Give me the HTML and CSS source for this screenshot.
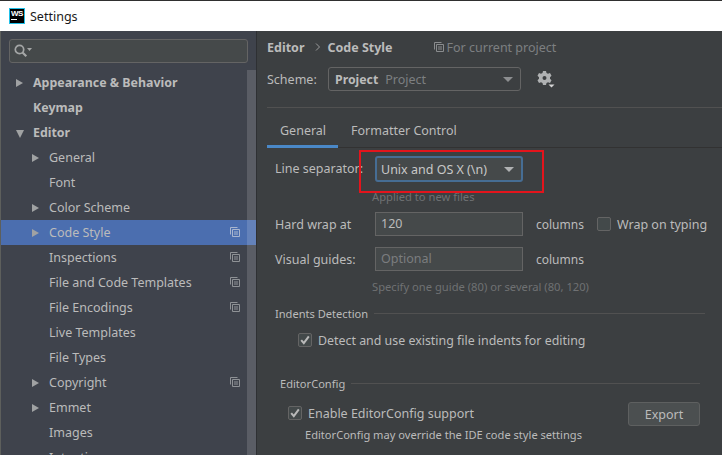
FILE: index.html
```html
<!DOCTYPE html>
<html lang="en">
<head>
<meta charset="utf-8">
<title>Settings</title>
<link rel="stylesheet" href="styles.css">
</head>
<body>
<svg class="defs" width="0" height="0" aria-hidden="true">
  <symbol id="copy" viewBox="0 0 10 10">
    <path d="M.5 7.500V.5h7M2.500 2.500h7v7h-7zM4 5h4M4 7h4" fill="none" stroke="currentColor"/>
  </symbol>
  <symbol id="check" viewBox="0 0 14 14">
    <path d="M3.200 7.200l2.600 3L10.800 3.400" fill="none" stroke="#b9b9b9" stroke-width="2"/>
  </symbol>
</svg>
<div class="window">
  <header class="titlebar">
    <span class="logo"><span class="logo-text">WS</span><span class="logo-bar"></span></span>
    <span class="title">Settings</span>
  </header>
  <div class="content">
    <aside class="sidebar">
      <div class="search">
        <svg class="search-icon" width="18" height="14" viewBox="0 0 18 14"><circle cx="5.500" cy="5.500" r="4.200" fill="none" stroke="#a4a6a6" stroke-width="1.700"/><path d="M8.500 8.500l3.800 3.800" stroke="#a4a6a6" stroke-width="2.200"/><path d="M13 4h5l-2.500 3z" fill="#a4a6a6"/></svg>
      </div>
      <div class="tree-wrap">
        <ul class="tree">
          <li class="row bold"><i class="arrow right"></i>Appearance &amp; Behavior</li>
          <li class="row bold"><i class="arrow none"></i>Keymap</li>
          <li class="row bold"><i class="arrow down"></i>Editor</li>
          <li class="row sub"><i class="arrow right"></i>General</li>
          <li class="row sub"><i class="arrow none"></i>Font</li>
          <li class="row sub"><i class="arrow right"></i>Color Scheme</li>
          <li class="row sub selected"><i class="arrow right"></i>Code Style<svg class="copy"><use href="#copy"/></svg></li>
          <li class="row sub"><i class="arrow none"></i>Inspections<svg class="copy"><use href="#copy"/></svg></li>
          <li class="row sub"><i class="arrow none"></i>File and Code Templates<svg class="copy"><use href="#copy"/></svg></li>
          <li class="row sub"><i class="arrow none"></i>File Encodings<svg class="copy"><use href="#copy"/></svg></li>
          <li class="row sub"><i class="arrow none"></i>Live Templates</li>
          <li class="row sub"><i class="arrow none"></i>File Types</li>
          <li class="row sub"><i class="arrow right"></i>Copyright<svg class="copy"><use href="#copy"/></svg></li>
          <li class="row sub"><i class="arrow right"></i>Emmet</li>
          <li class="row sub"><i class="arrow none"></i>Images</li>
          <li class="row sub"><i class="arrow none"></i>Intentions</li>
        </ul>
        <div class="scrollbar"></div>
      </div>
    </aside>
    <main class="main">
      <div class="crumbs">
        <span class="crumb">Editor</span>
        <svg class="chev" width="6" height="8" viewBox="0 0 6 8"><path d="M1 .5L4.500 4 1 7.500" fill="none" stroke="#9a9c9d"/></svg>
        <span class="crumb">Code Style</span>
        <svg class="copy project-icon"><use href="#copy"/></svg>
        <span class="muted-lg">For current project</span>
      </div>
      <div class="scheme">
        <span class="scheme-label">Scheme:</span>
        <div class="combo scheme-combo">
          <b class="scheme-name">Project</b><span class="muted-lg">Project</span>
          <i class="caret dim"></i>
        </div>
        <svg class="gear" width="18" height="18" viewBox="0 0 18 18"><path fill="#b0b2b3" fill-rule="evenodd" d="M6 1h3l.5 2 1.500.8 2-.7 1.500 2.600-1.500 1.500v1.600l1.500 1.500-1.500 2.600-2-.7-1.500.8L9 15H6l-.5-2-1.500-.8-2 .7L.5 10.300l1.500-1.500V7.200L.5 5.700 2 3.100l2 .7 1.500-.8zM7.500 6a2 2 0 100 4 2 2 0 000-4z"/><path fill="#d5d5d5" d="M11.500 14.500h6l-3 3z"/></svg>
      </div>
      <nav class="tabs">
        <span class="tab active">General</span>
        <span class="tab">Formatter Control</span>
      </nav>
      <section class="form">
        <div class="field first">
          <label class="field-label">Line separator:</label>
          <div class="combo line-combo">Unix and OS X (\n)<i class="caret"></i></div>
        </div>
        <p class="hint hint-applied">Applied to new files</p>
        <div class="field">
          <label class="field-label">Hard wrap at</label>
          <div class="input">120</div>
          <span class="unit">columns</span>
          <span class="box wrap-box"></span>
          <span>Wrap on typing</span>
        </div>
        <div class="field guides">
          <label class="field-label">Visual guides:</label>
          <div class="input placeholder">Optional</div>
          <span class="unit">columns</span>
        </div>
        <p class="hint hint-guides">Specify one guide (80) or several (80, 120)</p>
        <div class="group indents">
          <span>Indents Detection</span><span class="rule"></span>
        </div>
        <div class="check-row detect">
          <span class="box checked"><svg width="14" height="14"><use href="#check"/></svg></span>
          <span>Detect and use existing file indents for editing</span>
        </div>
        <div class="group editorconfig">
          <span>EditorConfig</span><span class="rule"></span>
        </div>
        <div class="check-row enable">
          <span class="box checked"><svg width="14" height="14"><use href="#check"/></svg></span>
          <span>Enable EditorConfig support</span>
          <button class="button">Export</button>
        </div>
        <p class="note">EditorConfig may override the IDE code style settings</p>
      </section>
    </main>
  </div>
</div>
<div class="annotation"></div>
</body>
</html>
```

FILE: styles.css
```css
* { box-sizing: border-box; }
html, body {
  margin: 0;
  height: 455px;
  overflow: hidden;
}
body {
  font-family: "Noto Sans", "Liberation Sans", sans-serif;
  font-size: 12.500px;
  color: #bbbbbb;
  background: #3c3f41;
}
.defs { position: absolute; }
.window {
  display: flex;
  flex-direction: column;
  height: 455px;
  overflow: hidden;
}
.titlebar {
  flex: none;
  height: 31px;
  display: flex;
  align-items: center;
  padding-left: 9px;
  gap: 5px;
  background: #fff;
  border-top: 1px solid #2f2f2f;
  color: #1a1a1a;
}
.logo {
  width: 16px;
  height: 16px;
  background: #000;
  border: 1px solid #21c0e8;
  display: flex;
  flex-direction: column;
  align-items: center;
  color: #fff;
}
.logo-text { font: 700 8px/9px "Liberation Sans", sans-serif; letter-spacing: -.5px; }
.logo-bar { width: 6px; height: 1px; margin: 1px 0 0 -6px; background: #fff; }
.content {
  flex: 1;
  display: flex;
  min-height: 0;
}
.sidebar {
  flex: none;
  width: 257px;
  background: #3f434c;
  border-left: 1px solid #5d5f5c;
  border-right: 1px solid #2e3033;
  padding-top: 8px;
  display: flex;
  flex-direction: column;
}
.search {
  flex: none;
  width: 239px;
  height: 24px;
  margin-left: 8px;
  background: #45494a;
  border: 1px solid #646464;
  border-radius: 3px;
  display: flex;
  align-items: center;
  padding-left: 4px;
}
.tree-wrap {
  flex: 1;
  position: relative;
  margin-top: 7px;
}
.tree {
  list-style: none;
  margin: 0;
  padding: 0;
}
.row {
  height: 25px;
  display: flex;
  align-items: center;
  padding-left: 15px;
  white-space: nowrap;
  position: relative;
}
.row.bold { font-weight: 700; font-size: 12.400px; }
.row.sub { padding-left: 31px; }
.row.selected { background: #4b6eaf; }
.arrow {
  flex: none;
  width: 17px;
  height: 8px;
  position: relative;
}
.arrow::before {
  content: "";
  position: absolute;
  left: 0;
  top: 0;
  border-style: solid;
  border-color: transparent;
}
.arrow.right::before {
  border-width: 4px 0 4px 7px;
  border-left-color: #a0a2a3;
}
.arrow.down::before {
  top: 1px;
  border-width: 8px 4px 0 4px;
  border-top-color: #a0a2a3;
}
.row .copy {
  position: absolute;
  left: 229px;
  top: 7px;
}
.copy {
  width: 10px;
  height: 10px;
  color: #8f9296;
  flex: none;
}
.selected .copy { color: #a9b6cf; }
.scrollbar {
  position: absolute;
  left: 246px;
  top: 0;
  bottom: 0;
  width: 9px;
  background: rgba(255, 255, 255, .14);
}
.main {
  flex: 1;
  min-width: 0;
  padding: 0 0 0 10px;
  background: #3c3f41;
}
.crumbs {
  height: 34px;
  padding-bottom: 2px;
  display: flex;
  align-items: center;
  white-space: nowrap;
}
.crumb { font-weight: 700; }
.chev { margin: 0 6px 0 11px; }
.project-icon { margin: 0 3px 0 41px; color: #8a8c8e; }
.muted-lg { color: #7d7f81; }
.scheme {
  height: 27px;
  display: flex;
  align-items: center;
  white-space: nowrap;
}
.scheme-label { width: 61px; padding-top: 2px; }
.combo {
  position: relative;
  display: flex;
  align-items: center;
  border-radius: 3px;
  color: #bbbbbb;
}
.scheme-combo {
  width: 193px;
  height: 24px;
  padding: 2px 0 0 6px;
  gap: 7px;
  border: 1px solid #646464;
  background: #3c3f41;
}
.scheme-name { font-size: 12.300px; }
.caret {
  position: absolute;
  right: 7px;
  top: 9px;
  border-style: solid;
  border-color: #b0b2b3 transparent transparent;
  border-width: 5px 5px 0;
}
.caret.dim { border-top-color: #8c8e90; }
.gear { margin: 1px 0 0 16px; }
.tabs {
  height: 41px;
  margin-top: 15px;
  border-top: 1px solid #515151;
  border-bottom: 1px solid #323232;
  display: flex;
  align-items: flex-end;
  white-space: nowrap;
}
.tab {
  height: 26px;
  padding: 1px 13px 0;
}
.tab.active {
  width: 71px;
  border-bottom: 3px solid #4a88c7;
  margin-bottom: -1px;
  height: 27px;
}
.form { padding-left: 8px; }
.field {
  display: flex;
  align-items: center;
  height: 24px;
  white-space: nowrap;
}
.field.first { margin-top: 8px; }
.field.guides { margin-top: 11px; }
.field-label { flex: none; width: 100px; }
.line-combo {
  width: 148px;
  height: 26px;
  margin-top: 2px;
  padding-left: 4px;
  border: 2px solid #466d94;
  background: #45494a;
  color: #c8c8c8;
}
.input {
  width: 148px;
  height: 24px;
  padding-left: 5px;
  line-height: 22px;
  border: 1px solid #646464;
  background: #45494a;
}
.placeholder { color: #7b7d7f; }
.unit { width: 74px; padding-left: 13px; font-size: 12px; }
.hint {
  margin: 0;
  padding-left: 97px;
  font-size: 11.200px;
  color: #6f7173;
  white-space: nowrap;
}
.hint-applied { height: 24px; line-height: 18px; margin-top: 8px; }
.hint-guides { height: 26px; line-height: 26px; margin-top: 3px; }
.box {
  flex: none;
  width: 14px;
  height: 14px;
  margin-right: 6px;
  border: 1px solid #646464;
  border-radius: 2px;
  background: #43494a;
  display: inline-block;
}
.box svg { display: block; margin: -1px; }
.group {
  display: flex;
  align-items: center;
  gap: 6px;
  height: 20px;
  font-size: 11.100px;
  white-space: nowrap;
}
.rule {
  flex: 1;
  height: 1px;
  background: #515151;
}
.indents { margin-top: 3px; margin-right: 17px; }
.check-row {
  display: flex;
  align-items: center;
  white-space: nowrap;
}
.detect {
  height: 24px;
  margin-top: 5px;
  padding-left: 23px;
  font-size: 12.400px;
}
.editorconfig {
  margin-top: 21px;
  margin-left: 5px;
  margin-right: 22px;
}
.enable {
  height: 24px;
  margin-top: 8px;
  padding-left: 13px;
}
.button {
  width: 72px;
  height: 24px;
  margin: 2px 22px 0 auto;
  padding: 0;
  border: 1px solid #5e6060;
  border-radius: 3px;
  background: #4b4f50;
  color: #bbbbbb;
  font: inherit;
}
.note {
  margin: 1px 0 0;
  padding-left: 30px;
  font-size: 11.100px;
  line-height: 18px;
  white-space: nowrap;
}
.annotation {
  position: absolute;
  left: 359px;
  top: 150px;
  width: 185px;
  height: 43px;
  border: 2px solid #e3141c;
  pointer-events: none;
}
```
